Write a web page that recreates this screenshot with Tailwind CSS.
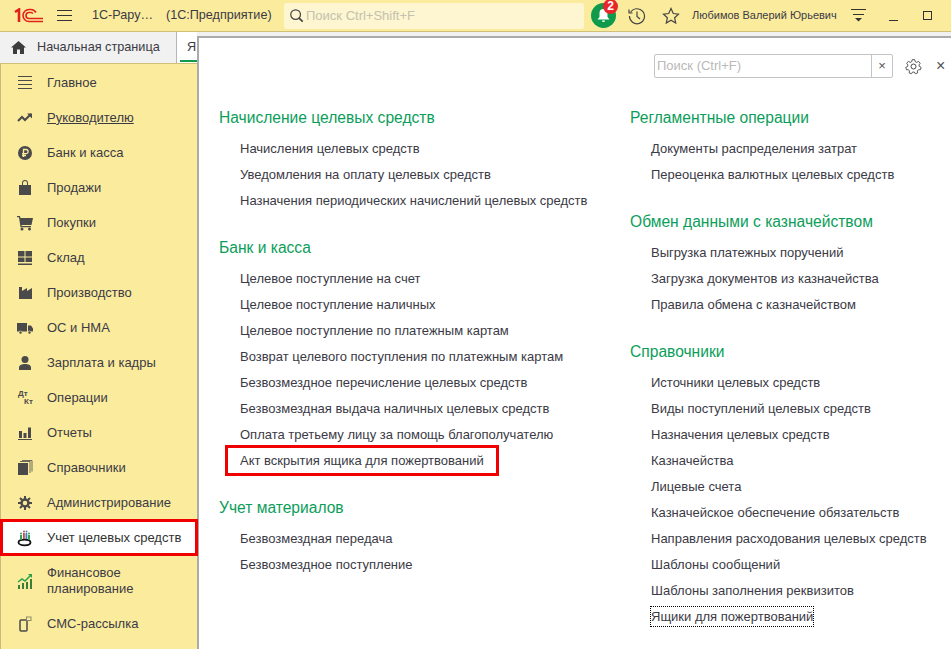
<!DOCTYPE html>
<html lang="ru">
<head>
    <meta charset="UTF-8">
    <meta name="viewport" content="width=device-width, initial-scale=1.0">
    <title>1С-Рарус</title>
    <script src="https://cdn.jsdelivr.net/npm/@tailwindcss/browser@4"></script>
</head>
<body class="bg-white h-[649px] w-[951px] overflow-hidden font-['Liberation_Sans',Arial,sans-serif] text-[13px] text-[#3b3a45] flex flex-col">

    <!-- top bar -->
    <header class="h-[32px] shrink-0 bg-[#fbec9d] border-b border-[#cfc077] flex items-center text-[12.6px]">
        <svg class="ml-[14px] w-[30px] h-[16px]" viewBox="0 0 30 16" fill="none" stroke="#e2211c" stroke-width="1.6">
            <path d="M1 4 L5 1.5 V14" stroke-width="2.6"/>
            <path d="M29 13.5 H15 a6 6 0 0 1 0 -12 h2 a6 6 0 0 1 5 3"/>
            <path d="M29 10.5 H15 a3 3 0 0 1 0 -6 h2 a3 3 0 0 1 2 1"/>
        </svg>
        <svg class="ml-[13px] w-[15px] h-[13px]" viewBox="0 0 15 13" stroke="#333" stroke-width="1"><path d="M0 1.5h15M0 6.5h15M0 11.5h15"/></svg>
        <span class="ml-[20px] w-[62px] whitespace-nowrap">1С-Рару…</span>
        <span class="ml-[12px] w-[118px] whitespace-nowrap">(1С:Предприятие)</span>
        <div class="w-[300px] h-[26px] bg-[#fdf6d0] rounded-[3px] flex items-center pl-[5px]">
            <svg class="w-[15px] h-[15px]" viewBox="0 0 17 17" fill="none" stroke="#444" stroke-width="1.4"><circle cx="7.5" cy="7.5" r="5.5"/><path d="M11.5 11.5l4 4" stroke-width="2"/></svg>
            <span class="ml-[2px] text-[#c4c1ae] text-[13px]">Поиск Ctrl+Shift+F</span>
        </div>
        <div class="relative ml-[7px] w-[25px] h-[25px] rounded-full bg-[#0f9a4c] flex items-center justify-center">
            <svg class="w-[15px] h-[15px]" viewBox="0 0 15 15" fill="#fff"><path d="M7.5 1a4 4 0 0 1 4 4v4l2 2.5H1.5l2-2.5V5a4 4 0 0 1 4-4zM6 12.5h3a1.5 1.5 0 0 1-3 0z"/></svg>
            <span class="absolute -top-[4px] -right-[2px] w-[15px] h-[15px] rounded-full bg-[#e8262a] text-white text-[12px] font-bold leading-[15px] text-center">2</span>
        </div>
        <svg class="ml-[12px] w-[18px] h-[18px]" viewBox="0 0 18 18" fill="none" stroke="#444" stroke-width="1.2"><path d="M2.5 5.5A7.5 7.5 0 1 1 1.5 9"/><path d="M1 2.5v3.5h3.5"/><path d="M9 4.5V9.5l3 2.5"/></svg>
        <svg class="ml-[16px] w-[18px] h-[18px]" viewBox="0 0 18 18" fill="none" stroke="#444" stroke-width="1.2"><path d="M9 1.5l2.3 5 5.2.6-3.9 3.6 1.1 5.3L9 13.300l-4.700 2.700 1.100-5.300L1.500 7.100l5.200-.6z"/></svg>
        <span class="ml-[12px] whitespace-nowrap text-[11px] w-[145px]">Любимов Валерий Юрьевич</span>
        <svg class="ml-[14px] w-[15px] h-[15px]" viewBox="0 0 15 15" stroke="#333" stroke-width="1"><path d="M0 1.500h15M2 6.500h11"/><path d="M4 10h7l-3.500 3.500z" fill="#333" stroke="none"/></svg>
        <div class="ml-[23px] w-[9px] h-[1px] mt-[9px] bg-[#333]"></div>
        <div class="ml-[25px] w-[9px] h-[9px] border border-[#333]"></div>
    </header>

    <!-- tabs -->
    <div class="h-[32px] shrink-0 flex items-stretch bg-[#f1f1f1] border-b border-[#cfc077] text-[12.7px]">
        <div class="w-[177px] flex items-center border-r border-[#b5b5b5]">
            <svg class="ml-[11px] w-[15px] h-[13px]" viewBox="0 0 15 13" fill="#3c3c3c"><path d="M7.500 0L15 6.500h-2V13H9V8.500H6V13H2V6.500H0z"/></svg>
            <span class="ml-[11px] whitespace-nowrap">Начальная страница</span>
        </div>
        <div class="relative bg-white w-[20px] pl-[10px] flex items-center overflow-hidden">
            <span>Я</span>
            <div class="absolute bottom-[1px] left-[3px] right-0 h-[2px] bg-[#0f9a4c]"></div>
        </div>
        <div class="flex-1"></div>
    </div>

    <div class="flex flex-1 min-h-0">
        <!-- sidebar -->
        <nav class="w-[197px] shrink-0 bg-[#fbec9d] border-l border-[#c9bb78] pt-[1px] flex flex-col">
            <a class="h-[35px] flex items-center gap-[14px] pl-[16px]">
                <svg class="w-[16px] h-[16px]" viewBox="0 0 16 16" stroke="#4a4a4a" stroke-width="1"><path d="M1 1.500h14M1 5.500h14M1 9.500h14M1 13.500h14"/></svg>
                <span>Главное</span>
            </a>
            <a class="h-[35px] flex items-center gap-[14px] pl-[16px]">
                <svg class="w-[16px] h-[16px]" viewBox="0 0 16 16" fill="none" stroke="#4a4a4a" stroke-width="2"><path d="M1 11l4-4 3 3 6-6"/><path d="M10 3.500h5v5" fill="#4a4a4a" stroke="none"/></svg>
                <span class="underline">Руководителю</span>
            </a>
            <a class="h-[35px] flex items-center gap-[14px] pl-[16px]">
                <svg class="w-[16px] h-[16px]" viewBox="0 0 16 16"><circle cx="8" cy="8" r="7" fill="#4a4a4a"/><path d="M6.500 12V4.500H9a2 2 0 0 1 0 4.200H5M5 10.500h4" fill="none" stroke="#fbec9d" stroke-width="1.300"/></svg>
                <span>Банк и касса</span>
            </a>
            <a class="h-[35px] flex items-center gap-[14px] pl-[16px]">
                <svg class="w-[16px] h-[16px]" viewBox="0 0 16 16" fill="#4a4a4a"><path d="M2 5h3V3a3 3 0 0 1 6 0v2h3v10H2zM6 5h4V3a2 2 0 0 0-4 0z"/></svg>
                <span>Продажи</span>
            </a>
            <a class="h-[35px] flex items-center gap-[14px] pl-[16px]">
                <svg class="w-[16px] h-[16px]" viewBox="0 0 16 16" fill="#4a4a4a"><path d="M0 1h3l.5 2H16l-1.500 7H4.500l.2 1H14v1.200H3.500L2 2.200H0z"/><circle cx="5" cy="14" r="1.500"/><circle cx="12.500" cy="14" r="1.500"/></svg>
                <span>Покупки</span>
            </a>
            <a class="h-[35px] flex items-center gap-[14px] pl-[16px]">
                <svg class="w-[16px] h-[16px]" viewBox="0 0 16 16" fill="#4a4a4a"><path d="M1 1h6.500v5.500H1zM8.500 1H15v5.500H8.500zM1 7.500h6.500V12H1zM8.500 7.500H15V12H8.500zM1 13.500h14V15H1z"/></svg>
                <span>Склад</span>
            </a>
            <a class="h-[35px] flex items-center gap-[14px] pl-[16px]">
                <svg class="w-[16px] h-[16px]" viewBox="0 0 16 16" fill="#4a4a4a"><path d="M2 2h3v4l5-3v3l5-3v11H2z"/></svg>
                <span>Производство</span>
            </a>
            <a class="h-[35px] flex items-center gap-[14px] pl-[16px]">
                <svg class="w-[16px] h-[16px]" viewBox="0 0 16 16" fill="#4a4a4a"><path d="M0 3h10v8.500H0zM11 5.500h3l2 3v3h-5z"/><circle cx="3.500" cy="12.500" r="1.500" stroke="#fbec9d" stroke-width=".6"/><circle cx="12.500" cy="12.500" r="1.500" stroke="#fbec9d" stroke-width=".6"/></svg>
                <span>ОС и НМА</span>
            </a>
            <a class="h-[35px] flex items-center gap-[14px] pl-[16px]">
                <svg class="w-[16px] h-[16px]" viewBox="0 0 16 16" fill="#4a4a4a"><circle cx="8" cy="4.500" r="3.500"/><path d="M2 15v-2.500C2 10 5 9 8 9s6 1 6 3.500V15z"/></svg>
                <span>Зарплата и кадры</span>
            </a>
            <a class="h-[35px] flex items-center gap-[14px] pl-[16px]">
                <div class="w-[16px] h-[16px] relative text-[#4a4a4a] text-[8px] font-bold leading-[8px]">
                    <span class="absolute left-[1px] top-0">Дт</span>
                    <span class="absolute left-[7px] top-[8px]">Кт</span>
                </div>
                <span>Операции</span>
            </a>
            <a class="h-[35px] flex items-center gap-[14px] pl-[16px]">
                <svg class="w-[16px] h-[16px]" viewBox="0 0 16 16" fill="#4a4a4a"><path d="M2 6h3v7H2zM6.500 8h3v5h-3zM11 2.500h3V13h-3zM1 14h14v1H1z"/></svg>
                <span>Отчеты</span>
            </a>
            <a class="h-[35px] flex items-center gap-[14px] pl-[16px]">
                <svg class="w-[16px] h-[16px]" viewBox="0 0 16 16" fill="#4a4a4a"><path d="M1 3h10v12H1z"/><path d="M3 1.500h10V13M5 .5h10v11" fill="none" stroke="#4a4a4a" stroke-width=".8"/></svg>
                <span>Справочники</span>
            </a>
            <a class="h-[35px] flex items-center gap-[14px] pl-[16px]">
                <svg class="w-[16px] h-[16px]" viewBox="0 0 16 16" fill="none" stroke="#4a4a4a"><circle cx="8" cy="8" r="3.500" stroke-width="2.500"/><path d="M8 1v3M8 12v3M1 8h3M12 8h3M3 3l2 2M11 11l2 2M13 3l-2 2M5 11l-2 2" stroke-width="2"/></svg>
                <span>Администрирование</span>
            </a>
            <a class="relative z-20 h-[37px] -mt-[1px] -ml-[1px] w-[198px] flex items-center gap-[14px] pl-[14px] bg-white border-[3px] border-[#f10000] text-[#333]">
                <svg class="w-[16px] h-[18px]" viewBox="0 0 16 18"><ellipse cx="7.500" cy="13.500" rx="6" ry="2.800" fill="none" stroke="#111" stroke-width="1.800"/><path d="M3 6h2v5H3z" fill="#2f9e57"/><path d="M6 4h1.800v6H6z" fill="#c94a4a"/><path d="M8.500 4h1.800v6H8.500z" fill="#3f7fc4"/><path d="M11 6h2v5h-2z" fill="#2f9e57"/><circle cx="4" cy="4.500" r="1" fill="#2f9e57"/><circle cx="7" cy="2.500" r="1" fill="#c94a4a"/><circle cx="9.500" cy="2.500" r="1" fill="#3f7fc4"/><circle cx="12" cy="4.500" r="1" fill="#2f9e57"/></svg>
                <span>Учет целевых средств</span>
            </a>
            <a class="h-[50px] flex items-center gap-[14px] pl-[16px] leading-[16px]">
                <svg class="shrink-0 w-[16px] h-[16px]" viewBox="0 0 16 16"><path d="M1 12h2v4H1zM5 10h2v6H5zM9 9h2v7H9zM13 6h2v10h-2z" fill="#3b7d3b"/><path d="M1 9l4-3 3 2 6-6" fill="none" stroke="#27a34a" stroke-width="1.500"/><path d="M11 1h4v4z" fill="#27a34a"/></svg>
                <span>Финансовое<br>планирование</span>
            </a>
            <a class="h-[35px] flex items-center gap-[14px] pl-[16px]">
                <svg class="w-[16px] h-[16px]" viewBox="0 0 16 16" fill="none"><rect x="3" y="4" width="7" height="11" rx="1" stroke="#4a4a4a" stroke-width="1.500"/><rect x="9.500" y="1" width="4.500" height="3.500" fill="#fbec9d" stroke="#8a8a6a"/></svg>
                <span>СМС-рассылка</span>
            </a>
        </nav>

        <!-- panel over the tab bar -->
        <main class="relative z-10 flex-1 -mt-[28px] bg-white border-l-2 border-t-2 border-[#ababab] pt-[16px]">
            <div class="flex items-center h-[24px]">
                <div class="ml-[455px] w-[239px] h-[24px] border border-[#c4c4c4] rounded-[2px] flex">
                    <span class="flex-1 pl-[2px] leading-[22px] text-[#b9b9b9]">Поиск (Ctrl+F)</span>
                    <span class="w-[21px] border-l border-[#c4c4c4] text-center leading-[21px] text-[#555]">×</span>
                </div>
                <svg class="ml-[12px] w-[17px] h-[17px]" viewBox="0 0 17 17" fill="none" stroke="#4a4a4a"><circle cx="8.500" cy="8.500" r="2.500"/><path d="M7 1h3l.4 2.200 1.700.8 2-1.200 1.900 2.200-1.300 1.800.3 1.700 2 1-.8 2.700-2.200-.1-1.200 1.400.4 2.200-2.700.9-1.100-1.900H7.500l-1.100 1.900-2.700-.9.400-2.200-1.200-1.400-2.200.1L0 9.500l2-1 .3-1.700L1 5l1.900-2.200 2 1.200 1.700-.8z" transform="translate(.8 .8) scale(.9)"/></svg>
                <span class="ml-[14px] text-[16px] text-[#555] leading-none">×</span>
            </div>

            <div class="ml-[20px] mt-[27px] grid grid-cols-[411px_1fr]">
                <div>
                    <h2 class="text-[15.6px] leading-[26px] text-[#0b9e5a]">Начисление целевых средств</h2>
                    <ul class="mt-[5px] ml-[21px] leading-[26px] whitespace-nowrap">
                        <li>Начисления целевых средств</li>
                        <li>Уведомления на оплату целевых средств</li>
                        <li>Назначения периодических начислений целевых средств</li>
                    </ul>
                    <h2 class="mt-[21px] text-[15.6px] leading-[26px] text-[#0b9e5a]">Банк и касса</h2>
                    <ul class="mt-[5px] ml-[21px] leading-[26px] whitespace-nowrap">
                        <li>Целевое поступление на счет</li>
                        <li>Целевое поступление наличных</li>
                        <li>Целевое поступление по платежным картам</li>
                        <li>Возврат целевого поступления по платежным картам</li>
                        <li>Безвозмездное перечисление целевых средств</li>
                        <li>Безвозмездная выдача наличных целевых средств</li>
                        <li>Оплата третьему лицу за помощь благополучателю</li>
                        <li class="relative">Акт вскрытия ящика для пожертвований
                            <div class="absolute left-[-15px] top-[-3px] w-[274px] h-[31px] border-[3px] border-[#f10000]"></div>
                        </li>
                    </ul>
                    <h2 class="mt-[21px] text-[15.6px] leading-[26px] text-[#0b9e5a]">Учет материалов</h2>
                    <ul class="mt-[5px] ml-[21px] leading-[26px] whitespace-nowrap">
                        <li>Безвозмездная передача</li>
                        <li>Безвозмездное поступление</li>
                    </ul>
                </div>
                <div>
                    <h2 class="text-[15.6px] leading-[26px] text-[#0b9e5a]">Регламентные операции</h2>
                    <ul class="mt-[5px] ml-[21px] leading-[26px] whitespace-nowrap">
                        <li>Документы распределения затрат</li>
                        <li>Переоценка валютных целевых средств</li>
                    </ul>
                    <h2 class="mt-[21px] text-[15.6px] leading-[26px] text-[#0b9e5a]">Обмен данными с казначейством</h2>
                    <ul class="mt-[5px] ml-[21px] leading-[26px] whitespace-nowrap">
                        <li>Выгрузка платежных поручений</li>
                        <li>Загрузка документов из казначейства</li>
                        <li>Правила обмена с казначейством</li>
                    </ul>
                    <h2 class="mt-[21px] text-[15.6px] leading-[26px] text-[#0b9e5a]">Справочники</h2>
                    <ul class="mt-[5px] ml-[21px] leading-[26px] whitespace-nowrap">
                        <li>Источники целевых средств</li>
                        <li>Виды поступлений целевых средств</li>
                        <li>Назначения целевых средств</li>
                        <li>Казначейства</li>
                        <li>Лицевые счета</li>
                        <li>Казначейское обеспечение обязательств</li>
                        <li>Направления расходования целевых средств</li>
                        <li>Шаблоны сообщений</li>
                        <li>Шаблоны заполнения реквизитов</li>
                        <li><span class="outline-1 outline-dotted outline-black -outline-offset-[1px] px-[1px] -ml-[1px] py-[3px]">Ящики для пожертвований</span></li>
                    </ul>
                </div>
            </div>
        </main>
    </div>
</body>
</html>
